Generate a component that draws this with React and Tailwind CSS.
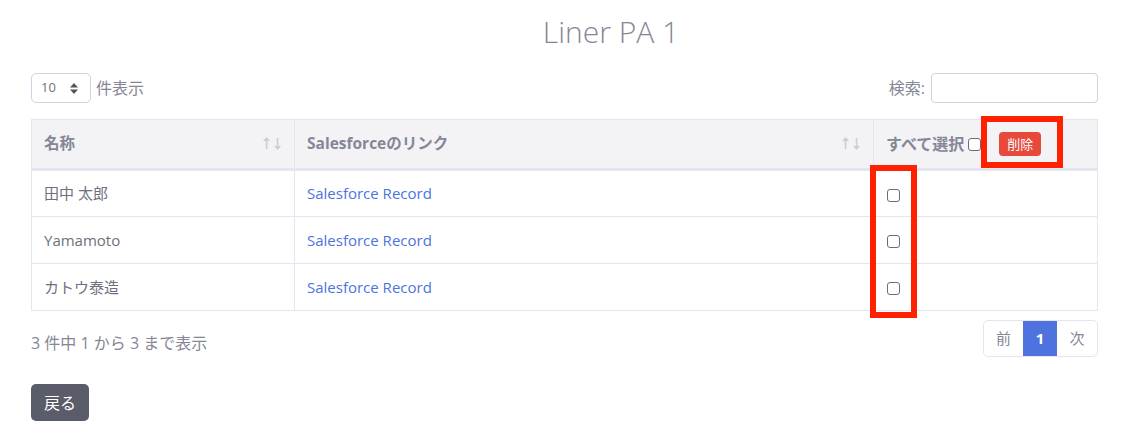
import React from 'react';

const rows = ['田中 太郎', 'Yamamoto', 'カトウ泰造'];

const SortIcon = () => (
  <span className="text-[13px] text-[#c8c9d2] tracking-[-2px] select-none">↑↓</span>
);

const Box = ({ className = '' }) => (
  <span className={`inline-block w-[13px] h-[13px] border border-[#6b6d75] rounded-[3px] bg-white ${className}`} />
);

export default function App() {
  return (
    <div
      className="relative w-[1123px] h-[434px] bg-white text-[#858796] overflow-hidden"
      style={{ fontFamily: '"Open Sans", "Noto Sans CJK JP", sans-serif' }}
    >
      {/* Title */}
      <h1 className="text-center text-[30px] font-light leading-none pt-[17px] pl-[99px] h-[73px] text-[#858796]">Liner PA 1</h1>

      <div className="ml-[31px] w-[1067px]">
        {/* controls */}
        <div className="flex items-center justify-between h-[30px]">
          <div className="flex items-center gap-[5px]">
            <div className="w-[60px] h-[30px] border border-[#d1d3e2] rounded-[5px] flex items-center justify-between pl-[9px] pr-[12px] text-[13px] text-[#6e707e]">
              <span>10</span>
              <svg width="8" height="11" viewBox="0 0 8 11">
                <path d="M4 0 L8 4.5 L0 4.5 Z M4 11 L8 6.5 L0 6.5 Z" fill="#555" />
              </svg>
            </div>
            <span className="text-[16px]">件表示</span>
          </div>
          <div className="flex items-center gap-[6px]">
            <span className="text-[16px]">検索:</span>
            <div className="w-[167px] h-[30px] border border-[#d1d3e2] rounded-[4px]" />
          </div>
        </div>

        {/* table */}
        <table className="mt-[16px] w-full border-collapse text-[15px]">
          <thead>
            <tr className="bg-[#f3f3f6] h-[50px] text-[15.5px]">
              <th className="w-[263px] border border-[#e3e6f0] border-b-[3px] text-left font-bold px-[12px]">
                <div className="flex items-center justify-between">
                  <span>名称</span>
                  <SortIcon />
                </div>
              </th>
              <th className="w-[579px] border border-[#e3e6f0] border-b-[3px] text-left font-bold px-[12px]">
                <div className="flex items-center justify-between">
                  <span>Salesforceのリンク</span>
                  <SortIcon />
                </div>
              </th>
              <th className="border border-[#e3e6f0] border-b-[3px] text-left font-bold px-[12px]">
                <div className="flex items-center">
                  <span className="text-[16px]">すべて選択</span>
                  <Box className="ml-[4px]" />
                  <span className="ml-[18px] bg-[#e74a3b] text-white text-[13px] font-normal rounded-[4px] px-[8px] h-[24px] leading-[24px]">削除</span>
                </div>
              </th>
            </tr>
          </thead>
          <tbody>
            {rows.map((name) => (
              <tr key={name} className="h-[47px]">
                <td className="border border-[#e3e6f0] px-[12px] text-[#6e707e]">{name}</td>
                <td className="border border-[#e3e6f0] px-[12px] text-[#4e73df]">Salesforce Record</td>
                <td className="border border-[#e3e6f0] px-[13px]">
                  <Box className="align-middle" />
                </td>
              </tr>
            ))}
          </tbody>
        </table>

        {/* footer */}
        <div className="flex items-start justify-between mt-[9px]">
          <div className="pt-[11px] text-[16px]">3 件中 1 から 3 まで表示</div>
          <div className="flex h-[37px] border border-[#e3e6f0] rounded-[5px] overflow-hidden text-[15px]">
            <span className="w-[39px] flex items-center justify-center">前</span>
            <span className="w-[34px] flex items-center justify-center bg-[#4e73df] text-white font-bold">1</span>
            <span className="w-[40px] flex items-center justify-center">次</span>
          </div>
        </div>

        <button className="mt-[27px] w-[58px] h-[37px] bg-[#5a5c69] text-white text-[16px] rounded-[5px]">戻る</button>
      </div>

      {/* annotation overlays */}
      <div className="absolute left-[981px] top-[116px] w-[82px] h-[52px] border-[6px] border-[#ff2200]" />
      <div className="absolute left-[870px] top-[165px] w-[47px] h-[153px] border-[6px] border-[#ff2200]" />
    </div>
  );
}
